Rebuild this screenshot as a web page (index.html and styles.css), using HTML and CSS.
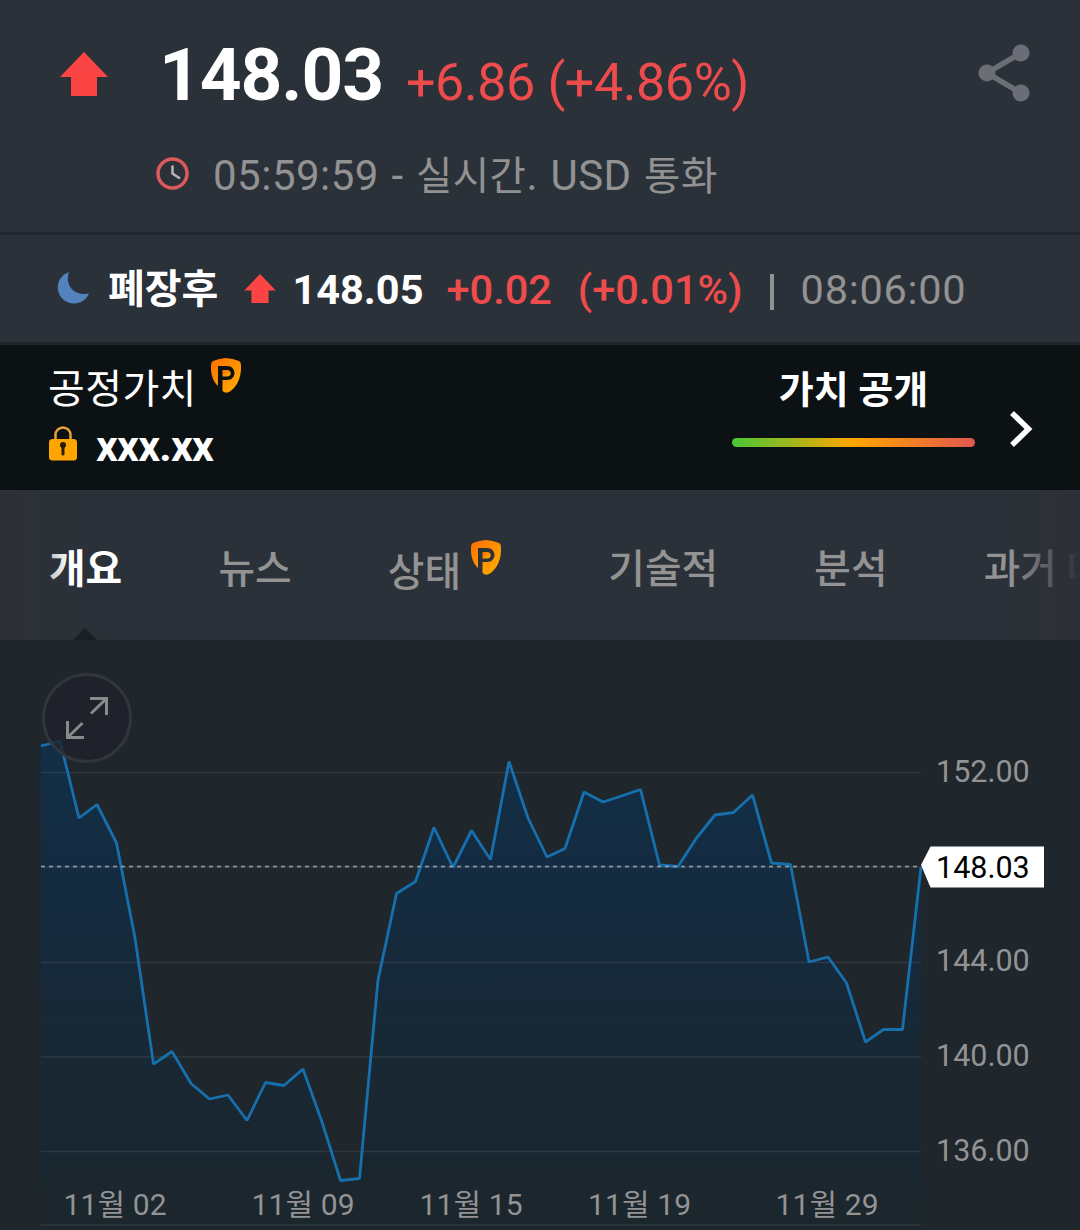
FILE: index.html
```
<!DOCTYPE html>
<html lang="ko">
<head>
    <meta charset="UTF-8">
    <meta name="viewport" content="width=device-width, initial-scale=1.0">
    <title>148.03 +6.86 (+4.86%)</title>
    <link rel="stylesheet" href="styles.css">
</head>
<body>
    <!-- Shared icons -->
    <svg class="defs" width="0" height="0">
        <defs>
            <linearGradient id="shield-fill" x1="0" y1="0" x2="1" y2="1">
                <stop offset="0" stop-color="#ff6d00"/>
                <stop offset="0.75" stop-color="#ffa200"/>
            </linearGradient>
            <symbol id="icon-up" viewBox="0 0 48 44">
                <path d="M24 0L48 25H37V44H11V25H0Z"/>
            </symbol>
            <symbol id="icon-shield" viewBox="0 0 30 35">
                <path d="M15 0Q22 .5 28 3Q30 4 30 7C30.500 18 27 28 19 33.500Q15 36 11.500 33V22H16C26 22 26 8 16 8H7V28C1 22-.5 14 0 7Q0 4 2 3Q8 .5 15 0Z" fill="url(#shield-fill)"/>
                <path d="M11.500 12H16C21 12 21 18.500 16 18.500H11.500Z" fill="url(#shield-fill)"/>
            </symbol>
        </defs>
    </svg>

    <header class="quote">
        <svg class="quote-arrow"><use href="#icon-up"/></svg>
        <div class="quote-main">
            <div class="quote-price">
                <span class="price">148.03</span>
                <span class="change">+6.86 (+4.86%)</span>
            </div>
            <div class="quote-info">
                <svg class="clock" viewBox="0 0 33 33">
                    <circle cx="16.500" cy="16.500" r="14.500"/>
                    <path d="M16.500 8.500V16.500L24 21.500"/>
                </svg>
                <span class="info-text">05:59:59 - <span class="ko">실시간</span>. USD <span class="ko">통화</span></span>
            </div>
        </div>
        <svg class="share" viewBox="0 0 52 58">
            <path d="M43 9L9 29L43 49"/>
            <circle cx="43" cy="9" r="8.500"/>
            <circle cx="9" cy="29" r="8.500"/>
            <circle cx="43" cy="49" r="8.500"/>
        </svg>
    </header>

    <section class="after-hours">
        <svg class="moon" viewBox="0 0 32 32"><path d="M12 0A16.200 16.200 0 1 0 32 21.500C19 24 7 15 12 0Z"/></svg>
        <span class="ah-label">폐장후</span>
        <svg class="ah-arrow"><use href="#icon-up"/></svg>
        <span class="ah-price">148.05</span>
        <span class="ah-change">+0.02</span>
        <span class="ah-percent">(+0.01%)</span>
        <span class="ah-divider"></span>
        <span class="ah-time">08:06:00</span>
    </section>

    <section class="fair-value">
        <div class="fv-left">
            <div class="fv-title">
                <span>공정가치</span>
                <svg class="shield"><use href="#icon-shield"/></svg>
            </div>
            <div class="fv-locked">
                <svg class="lock" viewBox="0 0 28 35">
                    <path class="shackle" d="M6.500 15V9A7.500 7.500 0 0 1 21.500 9V15"/>
                    <rect y="13" width="28" height="21.500" rx="3.500"/>
                    <path class="keyhole" d="M14 20V28"/>
                    <circle class="keyhole-top" cx="14" cy="19" r="3"/>
                </svg>
                <span class="fv-value">xxx.xx</span>
            </div>
        </div>
        <div class="fv-right">
            <span class="fv-reveal">가치 공개</span>
            <div class="fv-bar"></div>
        </div>
        <svg class="chevron" viewBox="0 0 24 38"><path d="M3 3L19.500 19L3 35"/></svg>
    </section>

    <nav class="tabs">
        <a class="tab active">개요</a>
        <a class="tab">뉴스</a>
        <a class="tab tab-pro">상태<svg class="shield"><use href="#icon-shield"/></svg></a>
        <a class="tab">기술적</a>
        <a class="tab">분석</a>
        <a class="tab">과거 데이터</a>
    </nav>

    <main class="chart">
        <svg width="1080" height="590" viewBox="0 640 1080 590">
            <defs>
                <linearGradient id="area-fill" gradientUnits="userSpaceOnUse" x1="0" y1="740" x2="0" y2="1225">
                    <stop offset="0" stop-color="#112f47"/>
                    <stop offset="0.3" stop-color="#142b40"/>
                    <stop offset="0.65" stop-color="#182834"/>
                    <stop offset="1" stop-color="#1c262d"/>
                </linearGradient>
            </defs>
            <path class="area" d="M41 746L60 741L79 818L97 804.500L116.500 843L135 938L153.500 1064L172 1051.500L191 1083.500L209.500 1099L228 1095L247 1120.500L265.500 1082.500L284 1085.500L303 1069L322 1122L340.500 1180.500L359.500 1178.500L378 980L396.500 893.500L415.500 881.500L434 827.500L453 867.500L471.500 830.500L490.500 859.500L509 761.500L528 818L547 857L565 848.500L584 792L603 802L621.500 796L640.500 789.500L659.500 865L678 866.500L696.500 838L715 815L733.500 812.500L752.500 795L771.500 863L790.500 864.500L809 962L828 957L846.500 983L865.500 1042L883.500 1029.500L902.500 1029.500L921 867V1225H41Z"/>
            <path class="grid" d="M41 772.500H921M41 867.500H921M41 962.500H921M41 1057H921M41 1151.500H921M41 1225H921"/>
            <polyline class="line" points="41,746 60,741 79,818 97,804.5 116.5,843 135,938 153.5,1064 172,1051.5 191,1083.5 209.5,1099 228,1095 247,1120.5 265.5,1082.5 284,1085.5 303,1069 322,1122 340.5,1180.5 359.5,1178.5 378,980 396.5,893.5 415.5,881.5 434,827.5 453,867.5 471.5,830.5 490.5,859.5 509,761.5 528,818 547,857 565,848.5 584,792 603,802 621.5,796 640.5,789.5 659.5,865 678,866.5 696.5,838 715,815 733.5,812.5 752.5,795 771.5,863 790.5,864.5 809,962 828,957 846.5,983 865.5,1042 883.5,1029.5 902.5,1029.5 921,867"/>
            <path class="current" d="M41 866.500H921"/>

            <g class="y-axis">
                <text x="936" y="782">152.00</text>
                <text x="936" y="971">144.00</text>
                <text x="936" y="1066">140.00</text>
                <text x="936" y="1161">136.00</text>
            </g>
            <g class="x-axis">
                <text x="63.500" y="1214.500" textLength="103">11월 02</text>
                <text x="251.500" y="1214.500" textLength="103">11월 09</text>
                <text x="419.500" y="1214.500" textLength="103">11월 15</text>
                <text x="588" y="1214.500" textLength="103">11월 19</text>
                <text x="775.500" y="1214.500" textLength="103">11월 29</text>
            </g>

            <path class="tag" d="M921 865L930.500 846.500H1044V887.500H930.500Z"/>
            <text class="tag-text" x="936" y="878">148.03</text>

            <g class="expand">
                <circle cx="87" cy="718" r="43.500"/>
                <path d="M90 698.500H106.500V715M106 699L91 713.500M67.500 721V737.500H84M68 737L82.500 723"/>
            </g>
        </svg>
    </main>
</body>
</html>
```
FILE: styles.css
```
* {
    margin: 0;
    padding: 0;
    box-sizing: border-box;
}

body {
    width: 1080px;
    height: 1230px;
    overflow: hidden;
    font-family: Roboto, 'Noto Sans CJK KR', sans-serif;
    background: #1f262c;
    color: #fff;
}

svg {
    display: block;
    flex-shrink: 0;
}

span,
.tab {
    white-space: nowrap;
}

.defs {
    position: absolute;
}

/* Quote header */
.quote {
    height: 235px;
    padding: 0 50px 0 60px;
    display: flex;
    align-items: flex-start;
    background: #2b3138;
    border-bottom: 3px solid #1f262d;
}

.quote-arrow {
    width: 48px;
    height: 44px;
    margin-top: 52px;
    fill: #fb4545;
}

.quote-main {
    flex: 1;
    padding: 25px 0 0 48px;
}

.quote-price {
    display: flex;
    align-items: baseline;
    gap: 23px;
    height: 100px;
    padding-left: 3px;
    line-height: 100px;
}

.price {
    font-size: 73px;
    font-weight: 700;
    letter-spacing: -1.100px;
}

.change {
    font-size: 52px;
    letter-spacing: -0.400px;
    color: #ee4c4c;
}

.quote-info {
    display: flex;
    align-items: center;
    gap: 24px;
    height: 97px;
}

.clock {
    width: 33px;
    height: 33px;
    fill: none;
    stroke-width: 3.500;
    stroke: #dc5a5c;
}

.clock path {
    stroke: #b5b5b5;
    stroke-width: 2.500;
}

.info-text {
    padding-top: 6px;
    font-size: 42px;
    line-height: 60px;
    letter-spacing: 0.500px;
    word-spacing: 1.500px;
    color: #929293;
}

.info-text .ko {
    font-size: 39.500px;
}

.share {
    width: 52px;
    height: 58px;
    margin-top: 43.500px;
    fill: #6b6e77;
}

.share path {
    fill: none;
    stroke: #6b6e77;
    stroke-width: 5.500;
}

/* After hours */
.after-hours {
    height: 110px;
    padding-left: 57px;
    display: flex;
    align-items: center;
    background: #2b3138;
    border-bottom: 3px solid #20262b;
    font-size: 41.500px;
    font-weight: 700;
    line-height: 60px;
}

.moon {
    width: 32px;
    height: 32px;
    margin-top: -2px;
    fill: #5383bd;
}

.ah-label {
    margin: 2px 0 0 19px;
    font-size: 40px;
}

.ah-arrow {
    width: 32px;
    height: 29px;
    margin-left: 26px;
    fill: #fb4545;
}

.ah-price {
    margin-left: 16px;
}

.ah-price,
.ah-change,
.ah-percent,
.ah-time {
    padding-top: 2px;
}

.ah-change,
.ah-percent {
    margin-left: 23px;
    color: #ee4c4c;
    font-weight: 500;
}

.ah-percent {
    margin-left: 26px;
}

.ah-divider {
    width: 4px;
    height: 36px;
    margin: 6px 0 0 27px;
    background: #929293;
}

.ah-time {
    margin-left: 27px;
    color: #929293;
    font-weight: 400;
    letter-spacing: 0.700px;
}

/* Fair value */
.fair-value {
    height: 145px;
    padding-left: 48px;
    display: flex;
    background: #0c1114;
}

.fv-left {
    width: 684px;
}

.fv-title {
    display: flex;
    gap: 14px;
    padding-top: 13px;
    font-size: 40px;
    line-height: 63px;
}

.fv-title span {
    letter-spacing: 0.400px;
}

.shield {
    width: 30px;
    height: 35px;
}

.fv-locked {
    display: flex;
    gap: 19px;
    padding: 5px 0 0 1px;
}

.lock {
    width: 28px;
    height: 35px;
    fill: #ffa500;
}

.lock .shackle {
    fill: none;
    stroke: #e8a33a;
    stroke-width: 2.500;
}

.lock .keyhole {
    stroke: #2b1d00;
    stroke-width: 3;
    stroke-linecap: round;
}

.lock .keyhole-top {
    fill: #2b1d00;
}

.fv-value {
    font-size: 43px;
    font-weight: 700;
    letter-spacing: -0.800px;
    line-height: 40px;
}

.fv-right {
    width: 243px;
    padding-top: 23px;
    text-align: center;
}

.fv-reveal {
    display: block;
    height: 70px;
    font-size: 38px;
    font-weight: 700;
    line-height: 44px;
}

.fv-bar {
    height: 9px;
    border-radius: 5px;
    background: linear-gradient(90deg, #49c738, #ffa500 50%, #e2574f);
}

.chevron {
    width: 24px;
    height: 38px;
    margin: 65px 0 0 34px;
    fill: none;
    stroke: #fff;
    stroke-width: 5.500;
}

/* Tabs */
.tabs {
    position: relative;
    height: 150px;
    padding-left: 49px;
    display: flex;
    overflow: hidden;
    background: #2b3138;
    color: #939394;
    font-size: 39.800px;
    font-weight: 500;
    line-height: 160px;
}

.tab {
    display: flex;
    flex-shrink: 0;
    margin-right: 96.200px;
}

.tab.active {
    color: #fff;
    font-weight: 700;
}

.tab-pro {
    padding-top: 3px;
}

.tab .shield {
    margin: 47px 11px 0 10px;
}

.tabs::before {
    content: '';
    position: absolute;
    left: 73px;
    bottom: 0;
    border: 12px solid transparent;
    border-top: 0;
    border-bottom-color: #1a1f25;
}

/* Scroll fade on both edges */
.tabs::after {
    content: '';
    position: absolute;
    inset: 0;
    background: linear-gradient(90deg, #2e3038, rgba(46, 48, 56, 0) 70px, rgba(46, 48, 56, 0) 1010px, #2e3038);
}

/* Chart */
.chart {
    height: 590px;
}

.area {
    fill: url(#area-fill);
}

.grid {
    stroke: #59636c;
    stroke-opacity: 0.300;
    stroke-width: 1.500;
}

.line {
    fill: none;
    stroke: #1670ad;
    stroke-width: 2.800;
    stroke-linejoin: bevel;
}

.current {
    stroke: #9aa0a4;
    stroke-width: 1.300;
    stroke-dasharray: 4 4;
}

.y-axis text,
.x-axis text {
    font-size: 30.500px;
    fill: #939394;
}

.x-axis text {
    font-size: 30px;
}

.tag {
    fill: #fff;
}

.tag-text {
    font-size: 30.500px;
    fill: #000;
}

.expand circle {
    fill: #1f222a;
    fill-opacity: 0.800;
    stroke: #31353d;
    stroke-width: 3;
}

.expand path {
    fill: none;
    stroke: #8a8a8a;
    stroke-width: 3;
}
```
